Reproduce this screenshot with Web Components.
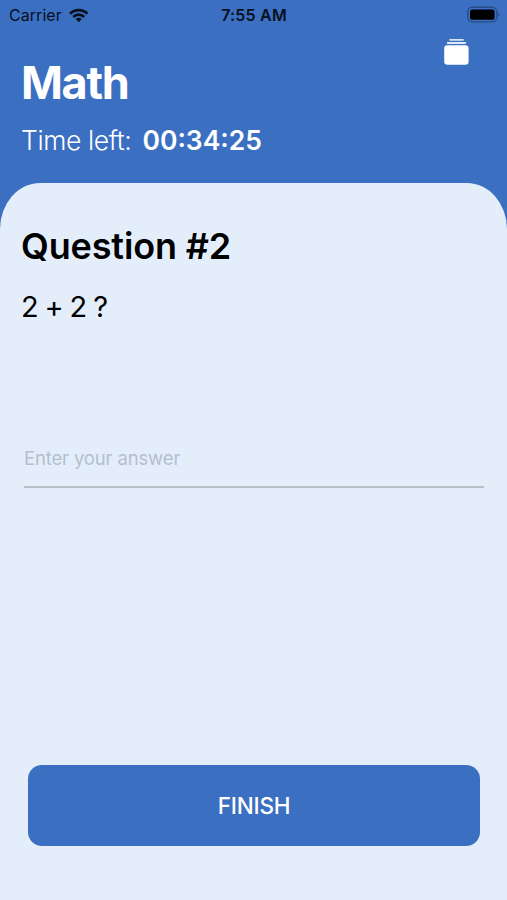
<!DOCTYPE html>
<html lang="en">
<head>
<meta charset="utf-8">
<meta name="viewport" content="width=device-width, initial-scale=1">
<title>Math</title>
<style>
  body {
    margin: 0;
    background: #3b6fc1;
    font-family: Inter, "Liberation Sans", sans-serif;
  }
</style>
</head>
<body>
<quiz-screen>
  <status-bar slot="status" carrier="Carrier" time="7:55 AM"></status-bar>
  <quiz-header slot="header" subject="Math" time-left="00:34:25"></quiz-header>
  <question-card heading="Question #2">
    2 + 2 ?
    <answer-field slot="answer" placeholder="Enter your answer"></answer-field>
    <action-button slot="action">FINISH</action-button>
  </question-card>
</quiz-screen>

<script>
const createTemplate = (html) => {
  const template = document.createElement("template");
  template.innerHTML = html;
  return template;
};

const screenTemplate = createTemplate(`
  <style>
    :host {
      display: flex;
      flex-direction: column;
      height: 900px;
      overflow: hidden;
    }
  </style>
  <slot name="status"></slot>
  <slot name="header"></slot>
  <slot></slot>
`);

const statusTemplate = createTemplate(`
  <style>
    :host {
      display: grid;
      grid-template-columns: 1fr auto 1fr;
      align-items: center;
      height: 30px;
      padding: 0 8px 0 9px;
      font-size: 16px;
      color: #07101f;
    }
    .left {
      display: flex;
      align-items: center;
      gap: 7px;
    }
    #carrier {
      letter-spacing: 0.05px;
    }
    #time {
      font-weight: 600;
      letter-spacing: 0.2px;
    }
    .battery {
      justify-self: end;
      margin-right: -1px;
    }
    svg {
      display: block;
    }
  </style>
  <div class="left">
    <span id="carrier"></span>
    <svg width="19.5" height="15" viewBox="0 0 20 15" fill="none" stroke="currentColor" stroke-width="2.9">
      <path d="M1.1 5.6a12.6 12.6 0 0 1 17.8 0"/>
      <path d="M4.4 9a7.9 7.9 0 0 1 11.2 0"/>
      <path d="M10 14.4 6.9 11.2a4.4 4.4 0 0 1 6.2 0z" fill="currentColor" stroke="none"/>
    </svg>
  </div>
  <span id="time"></span>
  <svg class="battery" width="33" height="18" viewBox="0 0 33 18">
    <rect x="0.8" y="1.3" width="29" height="14.6" rx="4.6" fill="none" stroke="#274c88" stroke-width="1.4"/>
    <rect x="3" y="3.4" width="24.6" height="10.4" rx="2.6" fill="#000"/>
    <path d="M31.2 6.2c1.7.8 1.7 4 0 4.8z" fill="#274c88"/>
  </svg>
`);

const headerTemplate = createTemplate(`
  <style>
    :host {
      display: flex;
      justify-content: space-between;
      height: 153px;
      padding: 0 38px 0 21px;
      box-sizing: border-box;
      color: #fff;
    }
    h1 {
      margin: 26px 0 0;
      font-size: 45px;
      line-height: 54px;
      font-weight: 700;
      letter-spacing: -1.3px;
    }
    .timer {
      display: flex;
      gap: 11px;
      margin-top: 14px;
      font-size: 26.5px;
      line-height: 32px;
    }
    .label {
      font-weight: 300;
      letter-spacing: -0.4px;
    }
    #left {
      font-weight: 600;
    }
    svg {
      display: block;
      margin-top: 8px;
    }
  </style>
  <div>
    <h1 id="subject"></h1>
    <div class="timer">
      <span class="label">Time left:</span>
      <span id="left"></span>
    </div>
  </div>
  <svg width="25" height="28" viewBox="0 0 25 28" fill="#fff">
    <rect x="5.2" y="1" width="14.6" height="1.7" rx=".7" opacity=".8"/>
    <rect x="2.8" y="4" width="19.4" height="1.9" rx=".8" opacity=".85"/>
    <rect x="0.2" y="7.3" width="24.4" height="19.4" rx="3.2"/>
  </svg>
`);

const cardTemplate = createTemplate(`
  <style>
    :host {
      display: flex;
      flex-direction: column;
      flex: 1;
      padding: 41px 23px 54px 21px;
      border-radius: 40px 40px 0 0 / 46px 46px 0 0;
      box-sizing: border-box;
      background: #e4eefb;
      color: #000;
    }
    h2 {
      margin: 0;
      font-size: 36px;
      line-height: 44px;
      font-weight: 600;
      letter-spacing: -0.15px;
    }
    .text {
      margin-top: 21px;
      font-size: 29px;
      line-height: 36px;
      letter-spacing: -0.5px;
      word-spacing: -1.3px;
    }
    .answer {
      margin: 121px 0 auto 3px;
    }
    .action {
      margin: 0 4px 0 7px;
    }
  </style>
  <h2 id="heading"></h2>
  <div class="text"><slot></slot></div>
  <div class="answer"><slot name="answer"></slot></div>
  <div class="action"><slot name="action"></slot></div>
`);

const fieldTemplate = createTemplate(`
  <style>
    :host {
      display: block;
      border-bottom: 2px solid #b9c1c6;
    }
    #placeholder {
      display: block;
      padding-bottom: 16px;
      font-size: 18.5px;
      line-height: 24px;
      letter-spacing: -0.15px;
      color: #b4bfcd;
    }
  </style>
  <span id="placeholder"></span>
`);

const buttonTemplate = createTemplate(`
  <style>
    :host {
      display: block;
    }
    button {
      display: block;
      width: 100%;
      height: 81px;
      padding: 0;
      border: 0;
      border-radius: 14px;
      background: #3b6fc1;
      color: #fff;
      font: 500 22.5px/28px Inter, "Liberation Sans", sans-serif;
      letter-spacing: -0.2px;
    }
  </style>
  <button type="button"><slot></slot></button>
`);

class TemplateElement extends HTMLElement {
  constructor(template) {
    super();
    const shadow = this.attachShadow({ mode: "open" });
    shadow.appendChild(template.content.cloneNode(true));
  }

  setText(id, attribute) {
    this.shadowRoot.getElementById(id).textContent = this.getAttribute(attribute);
  }
}

class QuizScreen extends TemplateElement {
  constructor() {
    super(screenTemplate);
  }
}

class StatusBar extends TemplateElement {
  constructor() {
    super(statusTemplate);
  }

  connectedCallback() {
    this.setText("carrier", "carrier");
    this.setText("time", "time");
  }
}

class QuizHeader extends TemplateElement {
  constructor() {
    super(headerTemplate);
  }

  connectedCallback() {
    this.setText("subject", "subject");
    this.setText("left", "time-left");
  }
}

class QuestionCard extends TemplateElement {
  constructor() {
    super(cardTemplate);
  }

  connectedCallback() {
    this.setText("heading", "heading");
  }
}

class AnswerField extends TemplateElement {
  constructor() {
    super(fieldTemplate);
  }

  connectedCallback() {
    this.setText("placeholder", "placeholder");
  }
}

class ActionButton extends TemplateElement {
  constructor() {
    super(buttonTemplate);
  }
}

customElements.define("quiz-screen", QuizScreen);
customElements.define("status-bar", StatusBar);
customElements.define("quiz-header", QuizHeader);
customElements.define("question-card", QuestionCard);
customElements.define("answer-field", AnswerField);
customElements.define("action-button", ActionButton);
</script>
</body>
</html>
